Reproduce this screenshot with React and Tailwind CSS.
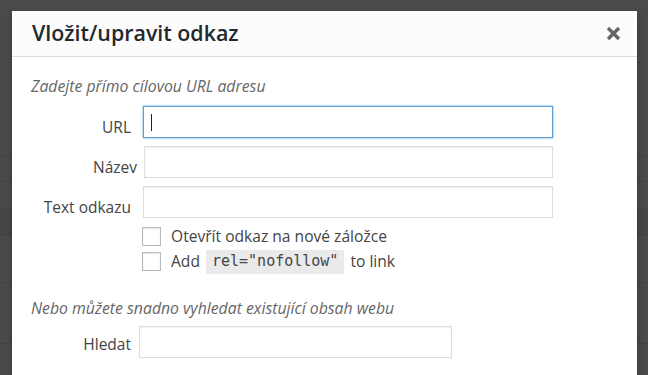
import React from "react";

function Row({ label, children, labelCls = "w-[99px]", gap = "gap-[12px]", shift = "pt-[10px]" }) {
  return (
    <div className={`flex items-center h-[32px] ${gap}`}>
      <div className={`${labelCls} ${shift} leading-[22px] text-right text-[15.5px] text-[#444] whitespace-nowrap`}>{label}</div>
      {children}
    </div>
  );
}

function Checkbox() {
  return <div className="w-[19px] h-[19px] border border-[#b4b9be] bg-white shadow-[inset_0_1px_2px_rgba(0,0,0,0.1)] shrink-0" />;
}

export default function App() {
  const font = { fontFamily: '"Open Sans", "Noto Sans", sans-serif' };
  return (
    <div className="relative w-[648px] h-[375px] overflow-hidden bg-[#4a4a4a]" style={font}>
      <div className="flex flex-col w-full">
        <div className="h-[156px] border-b border-[#424242]" />
        <div className="h-[26px] border-b border-[#424242]" />
        <div className="h-[28px] border-b border-[#424242]" />
        <div className="h-[26px] border-b border-[#424242] bg-[#464646]" />
        <div className="h-[47px] border-b border-[#424242]" />
        <div className="h-[61px] border-b border-[#424242]" />
        <div className="h-[31px]" />
      </div>
      <div className="absolute left-[12px] top-[11px] w-[625px] h-[400px] bg-white shadow-[0_3px_6px_rgba(0,0,0,0.3)]">
        <div className="h-[46px] bg-[#fcfcfc] border-b border-[#dddddd] flex items-center justify-between pl-[20px] pr-[16px]">
          <div className="text-[21.4px] font-semibold text-[#23282d] leading-none pb-[2px]">Vložit/upravit odkaz</div>
          <svg width="15" height="15" viewBox="0 0 15 15">
            <path d="M2 2 L13 13 M13 2 L2 13" stroke="#666" strokeWidth="3.4" strokeLinecap="butt" />
          </svg>
        </div>
        <div className="pl-[20px] pt-[19px]">
          <div className="italic text-[15.8px] text-[#666] leading-[20px] -ml-[1px]">Zadejte přímo cílovou URL adresu</div>
          <div className="flex flex-col gap-[8px] mt-[10px]">
            <Row label="URL">
              <div className="w-[410px] h-[32px] border border-[#5b9dd9] shadow-[0_0_2px_rgba(30,140,190,0.8)] flex items-center pl-[7px]">
                <div className="w-[1px] h-[17px] bg-[#222]" />
              </div>
            </Row>
            <Row label="Název" labelCls="w-[105px]" gap="gap-[7px]">
              <div className="w-[409px] h-[32px] border border-[#dddddd] shadow-[inset_0_1px_2px_rgba(0,0,0,0.07)]" />
            </Row>
            <Row label="Text odkazu">
              <div className="w-[410px] h-[32px] border border-[#dddddd] shadow-[inset_0_1px_2px_rgba(0,0,0,0.07)]" />
            </Row>
          </div>
          <div className="flex flex-col gap-[6px] mt-[9px] pl-[110px] text-[15.6px] text-[#444]">
            <div className="flex items-center gap-[10px] h-[19px]">
              <Checkbox />
              <span className="whitespace-nowrap">Otevřít odkaz na nové záložce</span>
            </div>
            <div className="flex items-center gap-[10px] h-[19px]">
              <Checkbox />
              <span className="flex items-center gap-[6px] whitespace-nowrap">
                Add
                <code className="bg-[#eaeaea] px-[6px] h-[24px] flex items-center text-[15px] text-[#444]" style={{ fontFamily: '"DejaVu Sans Mono", monospace' }}>rel="nofollow"</code>
                to link
              </span>
            </div>
          </div>
          <div className="italic text-[15.8px] text-[#666] leading-[20px] mt-[27px] whitespace-nowrap -ml-[1px]">Nebo můžete snadno vyhledat existující obsah webu</div>
          <div className="mt-[8px]">
            <Row label="Hledat" gap="gap-[8px]" shift="pt-[3px]">
              <div className="w-[313px] h-[32px] border border-[#dddddd] shadow-[inset_0_1px_2px_rgba(0,0,0,0.07)]" />
            </Row>
          </div>
        </div>
      </div>
    </div>
  );
}
